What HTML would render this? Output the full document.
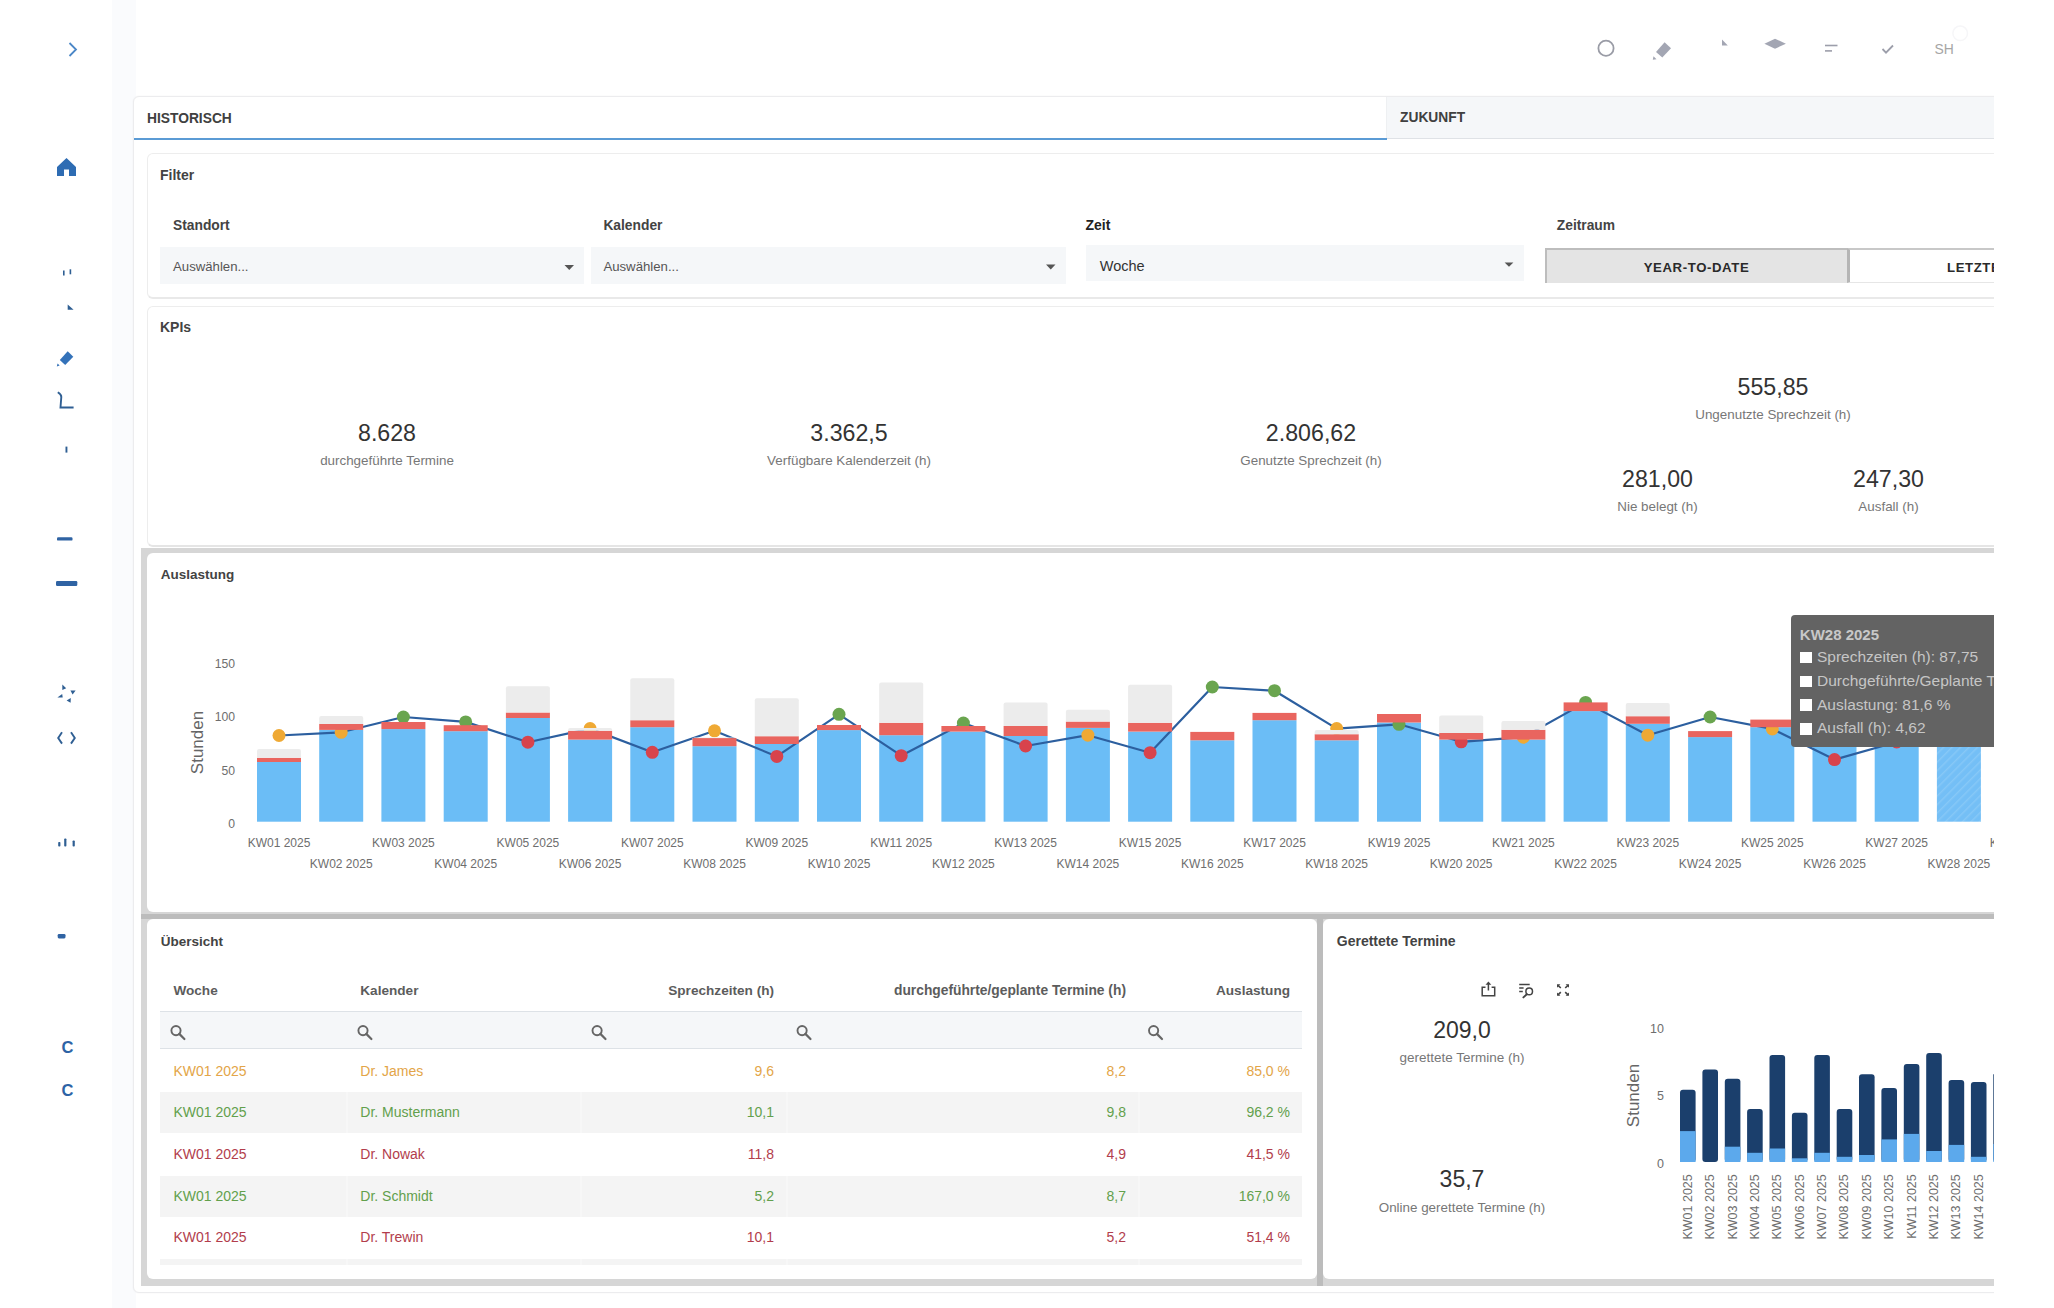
<!DOCTYPE html>
<html><head><meta charset="utf-8">
<style>
html,body{margin:0;padding:0;}
body{width:2054px;height:1308px;overflow:hidden;position:relative;background:#ffffff;font-family:"Liberation Sans",sans-serif;}
.t{position:absolute;white-space:nowrap;line-height:1;}
.r{position:absolute;}
.clip{position:absolute;left:0;top:0;width:1994px;height:1308px;overflow:hidden;}
svg{position:absolute;left:0;top:0;}
</style></head><body>
<div class="r" style="left:112px;top:0px;width:24px;height:1308px;background:#fafbfd;"></div>
<div class="r" style="left:0px;top:0px;width:112px;height:1308px;background:#ffffff;"></div>
<svg width="2054" height="100" style="left:0;top:0">
<circle cx="1606" cy="48.2" r="7.6" fill="none" stroke="#9a9ca6" stroke-width="1.8"/>
<g fill="#a3a6b3">
<path d="M1656 52 L1664.6 42.3 L1671 48.2 L1662.3 57.6 Z"/>
<path d="M1652.8 59.8 L1653.5 56.3 L1656.5 59.2 Z"/>
<path d="M1722 39.5 L1727.8 45.5 L1722 45.5 Z"/>
<path d="M1764.4 43.7 L1775 38.7 L1785.9 43.7 L1775 48.7 Z"/>
</g>
<g stroke="#9c9eaa" stroke-width="1.6" fill="none">
<line x1="1825" y1="45.5" x2="1837.5" y2="45.5"/>
<line x1="1825" y1="50.9" x2="1832" y2="50.9"/>
<path d="M1882.5 49 L1886 52.6 L1893 45.5" stroke-width="1.8"/>
</g>
<circle cx="1960.2" cy="33.3" r="7.3" fill="none" stroke="#f6f6f8" stroke-width="1.5"/>
</svg>
<div class="t" style="left:1934.4px;top:42.83px;font-size:13.9px;color:#a6a6a6;">SH</div>
<svg width="112" height="1308" style="left:0;top:0">
<path d="M69.5 43 L76 49.5 L69.5 56" fill="none" stroke="#4b87c7" stroke-width="1.8"/>
<path d="M57 167 L66.5 158 L76 167 L76 176 L69 176 L69 169.5 L64 169.5 L64 176 L57 176 Z" fill="#2e6cb3"/>
<g fill="#2f5f93">
<rect x="63" y="270.5" width="1.6" height="5"/>
<rect x="69.6" y="269.3" width="1.6" height="5"/>
<path d="M67.7 304.6 L73.6 309.7 L67.7 309.7 Z"/>
</g>
<path d="M59.8 360 L67.7 351.2 L73.3 356.7 L65.2 365.1 Z" fill="#3472b9"/>
<path d="M56.8 366.4 L57.6 363.4 L59.6 365.6 Z" fill="#3472b9"/>
<path d="M57.8 392.3 Q61.5 394.5 61.3 397 L60.5 407.5 L73.6 407.5" fill="none" stroke="#2f5f93" stroke-width="1.9"/>
<rect x="65.5" y="446.6" width="1.9" height="6" fill="#2f5f93"/>
<rect x="57" y="537.2" width="15.5" height="3.4" rx="1.2" fill="#2f63a3"/>
<rect x="56" y="581" width="21.3" height="5" rx="1.2" fill="#2f63a3"/>
<g fill="#2f5f93">
<path d="M62.3 684.6 L66.2 688.2 L62.3 690 Z"/>
<path d="M70.4 690.4 L75.6 690.4 L72.6 694.6 Z"/>
<path d="M57.4 697.4 L62.2 694 L62.7 697.4 Z"/>
<path d="M70.8 698 L70.6 702.8 L66.6 700.4 Z"/>
</g>
<path d="M62 732.3 L58.2 738 L62 743.6 M71 732.3 L74.8 738 L71 743.6" fill="none" stroke="#2f5f93" stroke-width="1.9"/>
<g fill="#2f5f93">
<rect x="58.2" y="842" width="2.2" height="4.6" rx="0.8"/>
<rect x="64.2" y="838.4" width="2.2" height="8.2" rx="0.8"/>
<rect x="72.6" y="840.5" width="2.2" height="6.1" rx="0.8"/>
</g>
<rect x="57.7" y="934" width="7.8" height="4.4" rx="1.3" fill="#2f63a3"/>
</svg>
<div class="t" style="left:61.5px;top:1038.53px;font-size:16.5px;color:#2d63a5;font-weight:700;">C</div>
<div class="t" style="left:61.5px;top:1081.63px;font-size:16.5px;color:#2d63a5;font-weight:700;">C</div>
<div class="clip">
<div class="r" style="left:133px;top:96px;width:2000px;height:1197px;background:#fff;border:1px solid #ececee;border-radius:6px;box-sizing:border-box;box-shadow:0 0 2px rgba(0,0,0,0.06);"></div>
<div class="r" style="left:1387px;top:97px;width:700px;height:42px;background:#f5f7f9;border-bottom:1px solid #dfe2e6;box-sizing:border-box;"></div>
<div class="r" style="left:1386px;top:97px;width:1px;height:42px;background:#eef0f2;"></div>
<div class="r" style="left:134px;top:138px;width:1253px;height:2px;background:#5b9bd5;"></div>
<div class="t" style="left:147.0px;top:112.12px;font-size:13.8px;color:#404040;font-weight:700;">HISTORISCH</div>
<div class="t" style="left:1400.0px;top:111.12px;font-size:13.8px;color:#404040;font-weight:700;">ZUKUNFT</div>
<div class="r" style="left:147px;top:153px;width:2000px;height:146px;background:#fff;border:1px solid #ededed;border-bottom:2px solid #e9e9e9;border-radius:6px;box-sizing:border-box;"></div>
<div class="t" style="left:160.0px;top:168.15px;font-size:14px;color:#434343;font-weight:700;">Filter</div>
<div class="t" style="left:173.0px;top:219.32px;font-size:13.8px;color:#434343;font-weight:700;">Standort</div>
<div class="t" style="left:603.4px;top:219.12px;font-size:13.8px;color:#434343;font-weight:700;">Kalender</div>
<div class="t" style="left:1085.5px;top:217.75px;font-size:14px;color:#222;font-weight:700;">Zeit</div>
<div class="t" style="left:1556.8px;top:219.02px;font-size:13.8px;color:#444;font-weight:700;">Zeitraum</div>
<div class="r" style="left:160px;top:247px;width:424px;height:37px;background:#f5f7f9;"></div>
<div class="r" style="left:591px;top:247px;width:475px;height:37px;background:#f5f7f9;"></div>
<div class="r" style="left:1086px;top:245px;width:438px;height:36px;background:#f5f7f9;"></div>
<div class="t" style="left:173.0px;top:259.82px;font-size:13.2px;color:#555;">Auswählen...</div>
<div class="t" style="left:603.4px;top:259.82px;font-size:13.2px;color:#555;">Auswählen...</div>
<div class="t" style="left:1099.8px;top:259.02px;font-size:14.5px;color:#333;">Woche</div>
<svg width="2054" height="300" style="left:0;top:0">
<path d="M564.5 265 L574 265 L569.25 270 Z" fill="#555"/>
<path d="M1046 264.5 L1055.5 264.5 L1050.75 269.5 Z" fill="#555"/>
<path d="M1504.6 262.5 L1513.4 262.5 L1509 266.8 Z" fill="#555"/>
</svg>
<div class="r" style="left:1545px;top:248px;width:303px;height:35px;background:#e4e4e4;border-left:2px solid #bdbdbd;border-top:2px solid #bdbdbd;box-sizing:border-box;"></div>
<div class="r" style="left:1847px;top:248px;width:300px;height:35px;background:#fff;border-left:3px solid #b5b5b5;border-top:2px solid #c8c8c8;border-bottom:1px solid #e6e6e6;box-sizing:border-box;"></div>
<div class="t" style="left:696.5px;width:2000px;text-align:center;top:261.12px;font-size:13.2px;color:#2a2a2a;font-weight:700;letter-spacing:0.6px;">YEAR-TO-DATE</div>
<div class="t" style="left:1947.0px;top:261.12px;font-size:13.2px;color:#2a2a2a;font-weight:700;letter-spacing:0.6px;">LETZTE</div>
<div class="r" style="left:147px;top:306px;width:2000px;height:241px;background:#fff;border:1px solid #ededed;border-bottom:2px solid #e5e5e5;border-radius:6px;box-sizing:border-box;"></div>
<div class="t" style="left:160.0px;top:319.75px;font-size:14px;color:#434343;font-weight:700;">KPIs</div>
<div class="t" style="left:-613.0px;width:2000px;text-align:center;top:421.96px;font-size:23.2px;color:#333;">8.628</div>
<div class="t" style="left:-613.0px;width:2000px;text-align:center;top:454.35px;font-size:13.4px;color:#777;">durchgeführte Termine</div>
<div class="t" style="left:-151.0px;width:2000px;text-align:center;top:421.96px;font-size:23.2px;color:#333;">3.362,5</div>
<div class="t" style="left:-151.0px;width:2000px;text-align:center;top:454.35px;font-size:13.4px;color:#777;">Verfügbare Kalenderzeit (h)</div>
<div class="t" style="left:311.0px;width:2000px;text-align:center;top:421.96px;font-size:23.2px;color:#333;">2.806,62</div>
<div class="t" style="left:311.0px;width:2000px;text-align:center;top:454.35px;font-size:13.4px;color:#777;">Genutzte Sprechzeit (h)</div>
<div class="t" style="left:773.0px;width:2000px;text-align:center;top:375.96px;font-size:23.2px;color:#333;">555,85</div>
<div class="t" style="left:773.0px;width:2000px;text-align:center;top:408.25px;font-size:13.4px;color:#777;">Ungenutzte Sprechzeit (h)</div>
<div class="t" style="left:657.5px;width:2000px;text-align:center;top:467.96px;font-size:23.2px;color:#333;">281,00</div>
<div class="t" style="left:657.5px;width:2000px;text-align:center;top:500.25px;font-size:13.4px;color:#777;">Nie belegt (h)</div>
<div class="t" style="left:888.5px;width:2000px;text-align:center;top:467.96px;font-size:23.2px;color:#333;">247,30</div>
<div class="t" style="left:888.5px;width:2000px;text-align:center;top:500.25px;font-size:13.4px;color:#777;">Ausfall (h)</div>
<div class="r" style="left:141px;top:548px;width:2000px;height:738px;background:#d6d6d6;"></div>
<div class="r" style="left:141px;top:914px;width:2000px;height:5px;background:#bcbcbc;"></div>
<div class="r" style="left:1317px;top:914px;width:6px;height:372px;background:#bcbcbc;"></div>
<div class="r" style="left:147px;top:553px;width:2000px;height:359px;background:#fff;border-radius:6px;"></div>
<div class="r" style="left:147px;top:919px;width:1170px;height:360px;background:#fff;border-radius:6px;"></div>
<div class="r" style="left:1323px;top:919px;width:1000px;height:360px;background:#fff;border-radius:6px;"></div>
<div class="t" style="left:160.7px;top:568.17px;font-size:13.5px;color:#434343;font-weight:700;">Auslastung</div>
<div class="t" style="left:160.7px;top:935.07px;font-size:13.5px;color:#434343;font-weight:700;">Übersicht</div>
<div class="t" style="left:1336.8px;top:933.95px;font-size:14px;color:#434343;font-weight:700;">Gerettete Termine</div>
<svg width="2054" height="1308" style="left:0;top:0">
<defs><pattern id="hatch" patternUnits="userSpaceOnUse" width="6" height="6" patternTransform="rotate(45)"><rect width="6" height="6" fill="#74bff6"/><rect width="1.5" height="6" fill="#86c8f7"/></pattern></defs>
<rect x="257.0" y="762" width="44" height="59.7" fill="#6bbdf6"/>
<rect x="319.2" y="729.9" width="44" height="91.8" fill="#6bbdf6"/>
<rect x="381.4" y="729.1" width="44" height="92.6" fill="#6bbdf6"/>
<rect x="443.7" y="731.2" width="44" height="90.5" fill="#6bbdf6"/>
<rect x="505.9" y="718" width="44" height="103.7" fill="#6bbdf6"/>
<rect x="568.1" y="739.6" width="44" height="82.1" fill="#6bbdf6"/>
<rect x="630.3" y="727.2" width="44" height="94.5" fill="#6bbdf6"/>
<rect x="692.5" y="746.2" width="44" height="75.5" fill="#6bbdf6"/>
<rect x="754.8" y="744" width="44" height="77.7" fill="#6bbdf6"/>
<rect x="817.0" y="730.1" width="44" height="91.6" fill="#6bbdf6"/>
<rect x="879.2" y="735.2" width="44" height="86.5" fill="#6bbdf6"/>
<rect x="941.4" y="731.6" width="44" height="90.1" fill="#6bbdf6"/>
<rect x="1003.6" y="736" width="44" height="85.7" fill="#6bbdf6"/>
<rect x="1065.9" y="727.9" width="44" height="93.8" fill="#6bbdf6"/>
<rect x="1128.1" y="731.6" width="44" height="90.1" fill="#6bbdf6"/>
<rect x="1190.3" y="740.3" width="44" height="81.4" fill="#6bbdf6"/>
<rect x="1252.5" y="720.2" width="44" height="101.5" fill="#6bbdf6"/>
<rect x="1314.7" y="740.3" width="44" height="81.4" fill="#6bbdf6"/>
<rect x="1377.0" y="722.5" width="44" height="99.2" fill="#6bbdf6"/>
<rect x="1439.2" y="739.6" width="44" height="82.1" fill="#6bbdf6"/>
<rect x="1501.4" y="739.6" width="44" height="82.1" fill="#6bbdf6"/>
<rect x="1563.6" y="711.1" width="44" height="110.6" fill="#6bbdf6"/>
<rect x="1625.8" y="723.8" width="44" height="97.9" fill="#6bbdf6"/>
<rect x="1688.1" y="737.1" width="44" height="84.6" fill="#6bbdf6"/>
<rect x="1750.3" y="727.2" width="44" height="94.5" fill="#6bbdf6"/>
<rect x="1812.5" y="740" width="44" height="81.7" fill="#6bbdf6"/>
<rect x="1874.7" y="738" width="44" height="83.7" fill="#6bbdf6"/>
<rect x="1936.9" y="735" width="44" height="86.7" fill="url(#hatch)"/>
<polyline points="279.0,735.5 341.2,732.3 403.4,717 465.7,721.9 527.9,742.2 590.1,728.6 652.3,752.3 714.5,730.8 776.8,756.4 839.0,714.3 901.2,755.7 963.4,723.1 1025.6,746 1087.9,735.2 1150.1,752.7 1212.3,687 1274.5,690.7 1336.7,728.6 1399.0,724.3 1461.2,741.8 1523.4,737.2 1585.6,702.4 1647.8,735.2 1710.1,717 1772.3,728.9 1834.5,759.6 1896.7,742 1958.9,735.7" fill="none" stroke="#2c5f9f" stroke-width="2.2" stroke-linejoin="round"/>
<circle cx="279.0" cy="735.5" r="6.5" fill="#efa934"/>
<circle cx="341.2" cy="732.3" r="6.5" fill="#efa934"/>
<circle cx="403.4" cy="717" r="6.5" fill="#6aa54f"/>
<circle cx="465.7" cy="721.9" r="6.5" fill="#6aa54f"/>
<circle cx="527.9" cy="742.2" r="6.5" fill="#d8434c"/>
<circle cx="590.1" cy="728.6" r="6.5" fill="#efa934"/>
<circle cx="652.3" cy="752.3" r="6.5" fill="#d8434c"/>
<circle cx="714.5" cy="730.8" r="6.5" fill="#efa934"/>
<circle cx="776.8" cy="756.4" r="6.5" fill="#d8434c"/>
<circle cx="839.0" cy="714.3" r="6.5" fill="#6aa54f"/>
<circle cx="901.2" cy="755.7" r="6.5" fill="#d8434c"/>
<circle cx="963.4" cy="723.1" r="6.5" fill="#6aa54f"/>
<circle cx="1025.6" cy="746" r="6.5" fill="#d8434c"/>
<circle cx="1087.9" cy="735.2" r="6.5" fill="#efa934"/>
<circle cx="1150.1" cy="752.7" r="6.5" fill="#d8434c"/>
<circle cx="1212.3" cy="687" r="6.5" fill="#6aa54f"/>
<circle cx="1274.5" cy="690.7" r="6.5" fill="#6aa54f"/>
<circle cx="1336.7" cy="728.6" r="6.5" fill="#efa934"/>
<circle cx="1399.0" cy="724.3" r="6.5" fill="#6aa54f"/>
<circle cx="1461.2" cy="741.8" r="6.5" fill="#d8434c"/>
<circle cx="1523.4" cy="737.2" r="6.5" fill="#efa934"/>
<circle cx="1585.6" cy="702.4" r="6.5" fill="#6aa54f"/>
<circle cx="1647.8" cy="735.2" r="6.5" fill="#efa934"/>
<circle cx="1710.1" cy="717" r="6.5" fill="#6aa54f"/>
<circle cx="1772.3" cy="728.9" r="6.5" fill="#efa934"/>
<circle cx="1834.5" cy="759.6" r="6.5" fill="#d8434c"/>
<circle cx="1896.7" cy="742" r="6.5" fill="#d8434c"/>
<circle cx="1958.9" cy="735.7" r="6.5" fill="#efa934"/>
<rect x="257.0" y="757.8" width="44" height="4.2" fill="#e9655f"/>
<path d="M257.0 757.8 V751 Q257.0 749 259.0 749 H299.0 Q301.0 749 301.0 751 V757.8 Z" fill="#ececec"/>
<rect x="319.2" y="724" width="44" height="5.9" fill="#e9655f"/>
<path d="M319.2 724 V718.1 Q319.2 716.1 321.2 716.1 H361.2 Q363.2 716.1 363.2 718.1 V724 Z" fill="#ececec"/>
<rect x="381.4" y="722" width="44" height="7.1" fill="#e9655f"/>
<rect x="443.7" y="725.2" width="44" height="6.0" fill="#e9655f"/>
<rect x="505.9" y="712.5" width="44" height="5.5" fill="#e9655f"/>
<path d="M505.9 712.5 V688.2 Q505.9 686.2 507.9 686.2 H547.9 Q549.9 686.2 549.9 688.2 V712.5 Z" fill="#ececec"/>
<rect x="568.1" y="730.8" width="44" height="8.8" fill="#e9655f"/>
<path d="M568.1 730.8 V729.9 Q568.1 727.9 570.1 727.9 H610.1 Q612.1 727.9 612.1 729.9 V730.8 Z" fill="#ececec"/>
<rect x="630.3" y="720.2" width="44" height="7.0" fill="#e9655f"/>
<path d="M630.3 720.2 V680.3 Q630.3 678.3 632.3 678.3 H672.3 Q674.3 678.3 674.3 680.3 V720.2 Z" fill="#ececec"/>
<rect x="692.5" y="738.1" width="44" height="8.1" fill="#e9655f"/>
<path d="M692.5 738.1 V739.4 Q692.5 737.4 694.5 737.4 H734.5 Q736.5 737.4 736.5 739.4 V738.1 Z" fill="#ececec"/>
<rect x="754.8" y="736.2" width="44" height="7.8" fill="#e9655f"/>
<path d="M754.8 736.2 V700.3 Q754.8 698.3 756.8 698.3 H796.8 Q798.8 698.3 798.8 700.3 V736.2 Z" fill="#ececec"/>
<rect x="817.0" y="725" width="44" height="5.1" fill="#e9655f"/>
<rect x="879.2" y="722.8" width="44" height="12.4" fill="#e9655f"/>
<path d="M879.2 722.8 V684.6 Q879.2 682.6 881.2 682.6 H921.2 Q923.2 682.6 923.2 684.6 V722.8 Z" fill="#ececec"/>
<rect x="941.4" y="726" width="44" height="5.6" fill="#e9655f"/>
<rect x="1003.6" y="726" width="44" height="10.0" fill="#e9655f"/>
<path d="M1003.6 726 V704.6 Q1003.6 702.6 1005.6 702.6 H1045.6 Q1047.6 702.6 1047.6 704.6 V726 Z" fill="#ececec"/>
<rect x="1065.9" y="721.6" width="44" height="6.3" fill="#e9655f"/>
<path d="M1065.9 721.6 V711.7 Q1065.9 709.7 1067.9 709.7 H1107.9 Q1109.9 709.7 1109.9 711.7 V721.6 Z" fill="#ececec"/>
<rect x="1128.1" y="722.8" width="44" height="8.8" fill="#e9655f"/>
<path d="M1128.1 722.8 V686.8 Q1128.1 684.8 1130.1 684.8 H1170.1 Q1172.1 684.8 1172.1 686.8 V722.8 Z" fill="#ececec"/>
<rect x="1190.3" y="731.9" width="44" height="8.4" fill="#e9655f"/>
<rect x="1252.5" y="712.9" width="44" height="7.3" fill="#e9655f"/>
<rect x="1314.7" y="734.2" width="44" height="6.1" fill="#e9655f"/>
<path d="M1314.7 734.2 V732.1 Q1314.7 730.1 1316.7 730.1 H1356.7 Q1358.7 730.1 1358.7 732.1 V734.2 Z" fill="#ececec"/>
<rect x="1377.0" y="714" width="44" height="8.5" fill="#e9655f"/>
<rect x="1439.2" y="733" width="44" height="6.6" fill="#e9655f"/>
<path d="M1439.2 733 V717.5 Q1439.2 715.5 1441.2 715.5 H1481.2 Q1483.2 715.5 1483.2 717.5 V733 Z" fill="#ececec"/>
<rect x="1501.4" y="729.8" width="44" height="9.8" fill="#e9655f"/>
<path d="M1501.4 729.8 V723 Q1501.4 721 1503.4 721 H1543.4 Q1545.4 721 1545.4 723 V729.8 Z" fill="#ececec"/>
<rect x="1563.6" y="702.4" width="44" height="8.7" fill="#e9655f"/>
<rect x="1625.8" y="716.2" width="44" height="7.6" fill="#e9655f"/>
<path d="M1625.8 716.2 V705.1 Q1625.8 703.1 1627.8 703.1 H1667.8 Q1669.8 703.1 1669.8 705.1 V716.2 Z" fill="#ececec"/>
<rect x="1688.1" y="731.1" width="44" height="6.0" fill="#e9655f"/>
<rect x="1750.3" y="719.6" width="44" height="7.6" fill="#e9655f"/>
<rect x="1812.5" y="733" width="44" height="7.0" fill="#e9655f"/>
<rect x="1874.7" y="731" width="44" height="7.0" fill="#e9655f"/>
</svg>
<div class="t" style="left:-1765.0px;width:2000px;text-align:right;top:657.97px;font-size:12.2px;color:#6e6e6e;">150</div>
<div class="t" style="left:-1765.0px;width:2000px;text-align:right;top:710.77px;font-size:12.2px;color:#6e6e6e;">100</div>
<div class="t" style="left:-1765.0px;width:2000px;text-align:right;top:764.67px;font-size:12.2px;color:#6e6e6e;">50</div>
<div class="t" style="left:-1765.0px;width:2000px;text-align:right;top:817.57px;font-size:12.2px;color:#6e6e6e;">0</div>
<div class="t" style="left:157px;top:734px;width:80px;text-align:center;font-size:17px;color:#666;transform:rotate(-90deg);">Stunden</div>
<div class="t" style="left:-721.0px;width:2000px;text-align:center;top:836.54px;font-size:12px;color:#6e6e6e;">KW01 2025</div>
<div class="t" style="left:-658.8px;width:2000px;text-align:center;top:857.74px;font-size:12px;color:#6e6e6e;">KW02 2025</div>
<div class="t" style="left:-596.6px;width:2000px;text-align:center;top:836.54px;font-size:12px;color:#6e6e6e;">KW03 2025</div>
<div class="t" style="left:-534.3px;width:2000px;text-align:center;top:857.74px;font-size:12px;color:#6e6e6e;">KW04 2025</div>
<div class="t" style="left:-472.1px;width:2000px;text-align:center;top:836.54px;font-size:12px;color:#6e6e6e;">KW05 2025</div>
<div class="t" style="left:-409.9px;width:2000px;text-align:center;top:857.74px;font-size:12px;color:#6e6e6e;">KW06 2025</div>
<div class="t" style="left:-347.7px;width:2000px;text-align:center;top:836.54px;font-size:12px;color:#6e6e6e;">KW07 2025</div>
<div class="t" style="left:-285.5px;width:2000px;text-align:center;top:857.74px;font-size:12px;color:#6e6e6e;">KW08 2025</div>
<div class="t" style="left:-223.2px;width:2000px;text-align:center;top:836.54px;font-size:12px;color:#6e6e6e;">KW09 2025</div>
<div class="t" style="left:-161.0px;width:2000px;text-align:center;top:857.74px;font-size:12px;color:#6e6e6e;">KW10 2025</div>
<div class="t" style="left:-98.8px;width:2000px;text-align:center;top:836.54px;font-size:12px;color:#6e6e6e;">KW11 2025</div>
<div class="t" style="left:-36.6px;width:2000px;text-align:center;top:857.74px;font-size:12px;color:#6e6e6e;">KW12 2025</div>
<div class="t" style="left:25.6px;width:2000px;text-align:center;top:836.54px;font-size:12px;color:#6e6e6e;">KW13 2025</div>
<div class="t" style="left:87.9px;width:2000px;text-align:center;top:857.74px;font-size:12px;color:#6e6e6e;">KW14 2025</div>
<div class="t" style="left:150.1px;width:2000px;text-align:center;top:836.54px;font-size:12px;color:#6e6e6e;">KW15 2025</div>
<div class="t" style="left:212.3px;width:2000px;text-align:center;top:857.74px;font-size:12px;color:#6e6e6e;">KW16 2025</div>
<div class="t" style="left:274.5px;width:2000px;text-align:center;top:836.54px;font-size:12px;color:#6e6e6e;">KW17 2025</div>
<div class="t" style="left:336.7px;width:2000px;text-align:center;top:857.74px;font-size:12px;color:#6e6e6e;">KW18 2025</div>
<div class="t" style="left:399.0px;width:2000px;text-align:center;top:836.54px;font-size:12px;color:#6e6e6e;">KW19 2025</div>
<div class="t" style="left:461.2px;width:2000px;text-align:center;top:857.74px;font-size:12px;color:#6e6e6e;">KW20 2025</div>
<div class="t" style="left:523.4px;width:2000px;text-align:center;top:836.54px;font-size:12px;color:#6e6e6e;">KW21 2025</div>
<div class="t" style="left:585.6px;width:2000px;text-align:center;top:857.74px;font-size:12px;color:#6e6e6e;">KW22 2025</div>
<div class="t" style="left:647.8px;width:2000px;text-align:center;top:836.54px;font-size:12px;color:#6e6e6e;">KW23 2025</div>
<div class="t" style="left:710.1px;width:2000px;text-align:center;top:857.74px;font-size:12px;color:#6e6e6e;">KW24 2025</div>
<div class="t" style="left:772.3px;width:2000px;text-align:center;top:836.54px;font-size:12px;color:#6e6e6e;">KW25 2025</div>
<div class="t" style="left:834.5px;width:2000px;text-align:center;top:857.74px;font-size:12px;color:#6e6e6e;">KW26 2025</div>
<div class="t" style="left:896.7px;width:2000px;text-align:center;top:836.54px;font-size:12px;color:#6e6e6e;">KW27 2025</div>
<div class="t" style="left:958.9px;width:2000px;text-align:center;top:857.74px;font-size:12px;color:#6e6e6e;">KW28 2025</div>
<div class="t" style="left:1021.2px;width:2000px;text-align:center;top:836.54px;font-size:12px;color:#6e6e6e;">KW29 2025</div>
<div class="r" style="left:1791px;top:615px;width:400px;height:132px;background:#636363;border-radius:4px;"></div>
<div class="t" style="left:1799.8px;top:626.90px;font-size:15px;color:#c8c8c8;font-weight:700;">KW28 2025</div>
<div class="r" style="left:1799.5px;top:651.9px;width:12px;height:11.5px;background:#fff;"></div>
<div class="t" style="left:1817.0px;top:649.28px;font-size:15.5px;color:#c6c6c6;">Sprechzeiten (h): 87,75</div>
<div class="r" style="left:1799.5px;top:675.6px;width:12px;height:11.5px;background:#fff;"></div>
<div class="t" style="left:1817.0px;top:672.98px;font-size:15.5px;color:#c6c6c6;">Durchgeführte/Geplante Termine (h): 71,61</div>
<div class="r" style="left:1799.5px;top:699.4px;width:12px;height:11.5px;background:#fff;"></div>
<div class="t" style="left:1817.0px;top:696.78px;font-size:15.5px;color:#c6c6c6;">Auslastung: 81,6 %</div>
<div class="r" style="left:1799.5px;top:723.1px;width:12px;height:11.5px;background:#fff;"></div>
<div class="t" style="left:1817.0px;top:720.48px;font-size:15.5px;color:#c6c6c6;">Ausfall (h): 4,62</div>
<div class="t" style="left:173.4px;top:983.78px;font-size:13.6px;color:#5c5c5c;font-weight:700;">Woche</div>
<div class="t" style="left:360.3px;top:983.78px;font-size:13.6px;color:#5c5c5c;font-weight:700;">Kalender</div>
<div class="t" style="left:-1226.0px;width:2000px;text-align:right;top:983.78px;font-size:13.6px;color:#5c5c5c;font-weight:700;">Sprechzeiten (h)</div>
<div class="t" style="left:-874.0px;width:2000px;text-align:right;top:983.62px;font-size:13.8px;color:#5c5c5c;font-weight:700;">durchgeführte/geplante Termine (h)</div>
<div class="t" style="left:-710.0px;width:2000px;text-align:right;top:983.78px;font-size:13.6px;color:#5c5c5c;font-weight:700;">Auslastung</div>
<div class="r" style="left:160px;top:1011px;width:1142px;height:38px;background:#f5f7f9;border-top:1px solid #dde2e7;border-bottom:1px solid #dde2e7;box-sizing:border-box;"></div>
<svg width="2054" height="1308" style="left:0;top:0"><circle cx="176.0" cy="1030.6" r="4.6" fill="none" stroke="#666" stroke-width="1.9"/><line x1="179.3" y1="1033.9" x2="184.4" y2="1039" stroke="#666" stroke-width="2.2" stroke-linecap="round"/><circle cx="363.0" cy="1030.6" r="4.6" fill="none" stroke="#666" stroke-width="1.9"/><line x1="366.29999999999995" y1="1033.9" x2="371.4" y2="1039" stroke="#666" stroke-width="2.2" stroke-linecap="round"/><circle cx="597.1" cy="1030.6" r="4.6" fill="none" stroke="#666" stroke-width="1.9"/><line x1="600.4" y1="1033.9" x2="605.5" y2="1039" stroke="#666" stroke-width="2.2" stroke-linecap="round"/><circle cx="802.1" cy="1030.6" r="4.6" fill="none" stroke="#666" stroke-width="1.9"/><line x1="805.4" y1="1033.9" x2="810.5" y2="1039" stroke="#666" stroke-width="2.2" stroke-linecap="round"/><circle cx="1153.6" cy="1030.6" r="4.6" fill="none" stroke="#666" stroke-width="1.9"/><line x1="1156.9" y1="1033.9" x2="1162" y2="1039" stroke="#666" stroke-width="2.2" stroke-linecap="round"/></svg>
<div class="t" style="left:173.4px;top:1063.55px;font-size:14px;color:#e3a548;">KW01 2025</div>
<div class="t" style="left:360.3px;top:1063.55px;font-size:14px;color:#e3a548;">Dr. James</div>
<div class="t" style="left:-1226.0px;width:2000px;text-align:right;top:1063.55px;font-size:14px;color:#e3a548;">9,6</div>
<div class="t" style="left:-874.0px;width:2000px;text-align:right;top:1063.55px;font-size:14px;color:#e3a548;">8,2</div>
<div class="t" style="left:-710.0px;width:2000px;text-align:right;top:1063.55px;font-size:14px;color:#e3a548;">85,0 %</div>
<div class="r" style="left:160px;top:1092px;width:1142px;height:41px;background:#f4f4f4;"></div>
<div class="r" style="left:346px;top:1092px;width:2px;height:41px;background:#f7f7f7;"></div>
<div class="r" style="left:580px;top:1092px;width:2px;height:41px;background:#f7f7f7;"></div>
<div class="r" style="left:786px;top:1092px;width:2px;height:41px;background:#f7f7f7;"></div>
<div class="r" style="left:1138px;top:1092px;width:2px;height:41px;background:#f7f7f7;"></div>
<div class="t" style="left:173.4px;top:1105.25px;font-size:14px;color:#62a04c;">KW01 2025</div>
<div class="t" style="left:360.3px;top:1105.25px;font-size:14px;color:#62a04c;">Dr. Mustermann</div>
<div class="t" style="left:-1226.0px;width:2000px;text-align:right;top:1105.25px;font-size:14px;color:#62a04c;">10,1</div>
<div class="t" style="left:-874.0px;width:2000px;text-align:right;top:1105.25px;font-size:14px;color:#62a04c;">9,8</div>
<div class="t" style="left:-710.0px;width:2000px;text-align:right;top:1105.25px;font-size:14px;color:#62a04c;">96,2 %</div>
<div class="t" style="left:173.4px;top:1146.95px;font-size:14px;color:#b23d4c;">KW01 2025</div>
<div class="t" style="left:360.3px;top:1146.95px;font-size:14px;color:#b23d4c;">Dr. Nowak</div>
<div class="t" style="left:-1226.0px;width:2000px;text-align:right;top:1146.95px;font-size:14px;color:#b23d4c;">11,8</div>
<div class="t" style="left:-874.0px;width:2000px;text-align:right;top:1146.95px;font-size:14px;color:#b23d4c;">4,9</div>
<div class="t" style="left:-710.0px;width:2000px;text-align:right;top:1146.95px;font-size:14px;color:#b23d4c;">41,5 %</div>
<div class="r" style="left:160px;top:1176px;width:1142px;height:41px;background:#f4f4f4;"></div>
<div class="r" style="left:346px;top:1176px;width:2px;height:41px;background:#f7f7f7;"></div>
<div class="r" style="left:580px;top:1176px;width:2px;height:41px;background:#f7f7f7;"></div>
<div class="r" style="left:786px;top:1176px;width:2px;height:41px;background:#f7f7f7;"></div>
<div class="r" style="left:1138px;top:1176px;width:2px;height:41px;background:#f7f7f7;"></div>
<div class="t" style="left:173.4px;top:1188.65px;font-size:14px;color:#62a04c;">KW01 2025</div>
<div class="t" style="left:360.3px;top:1188.65px;font-size:14px;color:#62a04c;">Dr. Schmidt</div>
<div class="t" style="left:-1226.0px;width:2000px;text-align:right;top:1188.65px;font-size:14px;color:#62a04c;">5,2</div>
<div class="t" style="left:-874.0px;width:2000px;text-align:right;top:1188.65px;font-size:14px;color:#62a04c;">8,7</div>
<div class="t" style="left:-710.0px;width:2000px;text-align:right;top:1188.65px;font-size:14px;color:#62a04c;">167,0 %</div>
<div class="t" style="left:173.4px;top:1230.35px;font-size:14px;color:#b23d4c;">KW01 2025</div>
<div class="t" style="left:360.3px;top:1230.35px;font-size:14px;color:#b23d4c;">Dr. Trewin</div>
<div class="t" style="left:-1226.0px;width:2000px;text-align:right;top:1230.35px;font-size:14px;color:#b23d4c;">10,1</div>
<div class="t" style="left:-874.0px;width:2000px;text-align:right;top:1230.35px;font-size:14px;color:#b23d4c;">5,2</div>
<div class="t" style="left:-710.0px;width:2000px;text-align:right;top:1230.35px;font-size:14px;color:#b23d4c;">51,4 %</div>
<div class="r" style="left:160px;top:1259px;width:1142px;height:6px;background:#f4f4f4;"></div>
<div class="r" style="left:346px;top:1259px;width:2px;height:6px;background:#f7f7f7;"></div>
<div class="r" style="left:580px;top:1259px;width:2px;height:6px;background:#f7f7f7;"></div>
<div class="r" style="left:786px;top:1259px;width:2px;height:6px;background:#f7f7f7;"></div>
<div class="r" style="left:1138px;top:1259px;width:2px;height:6px;background:#f7f7f7;"></div>
<svg width="2054" height="1308" style="left:0;top:0">
<g fill="none" stroke="#444" stroke-width="1.5">
<path d="M1485.5 987.3 H1482.2 V995.7 H1494.7 V987.3 H1491.6"/>
<path d="M1488.4 990.5 V983.5"/>
<path d="M1519.2 984.5 H1529.7 M1519.2 988 H1523.6 M1519.2 991.4 H1522.8"/>
<circle cx="1529.2" cy="991.4" r="3.3"/>
<path d="M1526.8 994.2 L1523.4 997.4" stroke-width="1.9" stroke-linecap="round"/>
<path d="M1558 985.3 L1560.8 988 M1568 985.3 L1565.2 988 M1558 994.8 L1560.8 992.1 M1568 994.8 L1565.2 992.1" stroke-width="1.6"/>
</g>
<g fill="#444">
<path d="M1485.5 984.7 L1491.3 984.7 L1488.4 981.4 Z"/>
<path d="M1557 984.3 L1560.4 984.3 L1557 987.7 Z M1569 984.3 L1565.6 984.3 L1569 987.7 Z M1557 995.8 L1560.4 995.8 L1557 992.4 Z M1569 995.8 L1565.6 995.8 L1569 992.4 Z"/>
</g>
</svg>
<div class="t" style="left:462.0px;width:2000px;text-align:center;top:1019.03px;font-size:23px;color:#333;">209,0</div>
<div class="t" style="left:462.0px;width:2000px;text-align:center;top:1051.07px;font-size:13.5px;color:#777;">gerettete Termine (h)</div>
<div class="t" style="left:462.0px;width:2000px;text-align:center;top:1168.23px;font-size:23px;color:#333;">35,7</div>
<div class="t" style="left:462.0px;width:2000px;text-align:center;top:1200.55px;font-size:13.4px;color:#777;">Online gerettete Termine (h)</div>
<div class="t" style="left:-336.0px;width:2000px;text-align:right;top:1023.22px;font-size:12.5px;color:#6e6e6e;">10</div>
<div class="t" style="left:-336.0px;width:2000px;text-align:right;top:1090.12px;font-size:12.5px;color:#6e6e6e;">5</div>
<div class="t" style="left:-336.0px;width:2000px;text-align:right;top:1157.72px;font-size:12.5px;color:#6e6e6e;">0</div>
<div class="t" style="left:1592.5px;top:1087px;width:80px;text-align:center;font-size:17px;color:#666;transform:rotate(-90deg);">Stunden</div>
<svg width="2054" height="1308" style="left:0;top:0">
<rect x="1680.0" y="1089.8" width="15.6" height="72.2" rx="3" fill="#1b3f6c"/>
<rect x="1680.0" y="1131.1" width="15.6" height="30.9" fill="#5ca9ec"/>
<rect x="1702.4" y="1069.6" width="15.6" height="92.4" rx="3" fill="#1b3f6c"/>
<rect x="1724.8" y="1078.8" width="15.6" height="83.2" rx="3" fill="#1b3f6c"/>
<rect x="1724.8" y="1146.7" width="15.6" height="15.3" fill="#5ca9ec"/>
<rect x="1747.1" y="1109" width="15.6" height="53.0" rx="3" fill="#1b3f6c"/>
<rect x="1747.1" y="1152.8" width="15.6" height="9.2" fill="#5ca9ec"/>
<rect x="1769.5" y="1055" width="15.6" height="107.0" rx="3" fill="#1b3f6c"/>
<rect x="1769.5" y="1148.5" width="15.6" height="13.5" fill="#5ca9ec"/>
<rect x="1791.9" y="1112.8" width="15.6" height="49.2" rx="3" fill="#1b3f6c"/>
<rect x="1791.9" y="1158.3" width="15.6" height="3.7" fill="#5ca9ec"/>
<rect x="1814.3" y="1055" width="15.6" height="107.0" rx="3" fill="#1b3f6c"/>
<rect x="1814.3" y="1152.8" width="15.6" height="9.2" fill="#5ca9ec"/>
<rect x="1836.7" y="1109.1" width="15.6" height="52.9" rx="3" fill="#1b3f6c"/>
<rect x="1836.7" y="1156.8" width="15.6" height="5.2" fill="#5ca9ec"/>
<rect x="1859.0" y="1074.2" width="15.6" height="87.8" rx="3" fill="#1b3f6c"/>
<rect x="1859.0" y="1155" width="15.6" height="7.0" fill="#5ca9ec"/>
<rect x="1881.4" y="1088" width="15.6" height="74.0" rx="3" fill="#1b3f6c"/>
<rect x="1881.4" y="1139.4" width="15.6" height="22.6" fill="#5ca9ec"/>
<rect x="1903.8" y="1064.1" width="15.6" height="97.9" rx="3" fill="#1b3f6c"/>
<rect x="1903.8" y="1133.9" width="15.6" height="28.1" fill="#5ca9ec"/>
<rect x="1926.2" y="1053.1" width="15.6" height="108.9" rx="3" fill="#1b3f6c"/>
<rect x="1926.2" y="1151" width="15.6" height="11.0" fill="#5ca9ec"/>
<rect x="1948.6" y="1080.1" width="15.6" height="81.9" rx="3" fill="#1b3f6c"/>
<rect x="1948.6" y="1144.9" width="15.6" height="17.1" fill="#5ca9ec"/>
<rect x="1970.9" y="1082.1" width="15.6" height="79.9" rx="3" fill="#1b3f6c"/>
<rect x="1970.9" y="1156.8" width="15.6" height="5.2" fill="#5ca9ec"/>
<rect x="1993.3" y="1072.4" width="15.6" height="89.6" rx="3" fill="#1b3f6c"/>
<rect x="1993.3" y="1144" width="15.6" height="18.0" fill="#5ca9ec"/>
</svg>
<div class="t" style="left:1647.8px;top:1207.5px;width:80px;text-align:right;font-size:12.5px;color:#6e6e6e;transform:rotate(-90deg);transform-origin:50% 50%;">KW01 2025</div>
<div class="t" style="left:1670.18px;top:1207.5px;width:80px;text-align:right;font-size:12.5px;color:#6e6e6e;transform:rotate(-90deg);transform-origin:50% 50%;">KW02 2025</div>
<div class="t" style="left:1692.56px;top:1207.5px;width:80px;text-align:right;font-size:12.5px;color:#6e6e6e;transform:rotate(-90deg);transform-origin:50% 50%;">KW03 2025</div>
<div class="t" style="left:1714.94px;top:1207.5px;width:80px;text-align:right;font-size:12.5px;color:#6e6e6e;transform:rotate(-90deg);transform-origin:50% 50%;">KW04 2025</div>
<div class="t" style="left:1737.32px;top:1207.5px;width:80px;text-align:right;font-size:12.5px;color:#6e6e6e;transform:rotate(-90deg);transform-origin:50% 50%;">KW05 2025</div>
<div class="t" style="left:1759.7px;top:1207.5px;width:80px;text-align:right;font-size:12.5px;color:#6e6e6e;transform:rotate(-90deg);transform-origin:50% 50%;">KW06 2025</div>
<div class="t" style="left:1782.08px;top:1207.5px;width:80px;text-align:right;font-size:12.5px;color:#6e6e6e;transform:rotate(-90deg);transform-origin:50% 50%;">KW07 2025</div>
<div class="t" style="left:1804.46px;top:1207.5px;width:80px;text-align:right;font-size:12.5px;color:#6e6e6e;transform:rotate(-90deg);transform-origin:50% 50%;">KW08 2025</div>
<div class="t" style="left:1826.84px;top:1207.5px;width:80px;text-align:right;font-size:12.5px;color:#6e6e6e;transform:rotate(-90deg);transform-origin:50% 50%;">KW09 2025</div>
<div class="t" style="left:1849.22px;top:1207.5px;width:80px;text-align:right;font-size:12.5px;color:#6e6e6e;transform:rotate(-90deg);transform-origin:50% 50%;">KW10 2025</div>
<div class="t" style="left:1871.6px;top:1207.5px;width:80px;text-align:right;font-size:12.5px;color:#6e6e6e;transform:rotate(-90deg);transform-origin:50% 50%;">KW11 2025</div>
<div class="t" style="left:1893.98px;top:1207.5px;width:80px;text-align:right;font-size:12.5px;color:#6e6e6e;transform:rotate(-90deg);transform-origin:50% 50%;">KW12 2025</div>
<div class="t" style="left:1916.36px;top:1207.5px;width:80px;text-align:right;font-size:12.5px;color:#6e6e6e;transform:rotate(-90deg);transform-origin:50% 50%;">KW13 2025</div>
<div class="t" style="left:1938.74px;top:1207.5px;width:80px;text-align:right;font-size:12.5px;color:#6e6e6e;transform:rotate(-90deg);transform-origin:50% 50%;">KW14 2025</div>
<div class="t" style="left:1961.12px;top:1207.5px;width:80px;text-align:right;font-size:12.5px;color:#6e6e6e;transform:rotate(-90deg);transform-origin:50% 50%;">KW15 2025</div>
</div>
</body></html>
